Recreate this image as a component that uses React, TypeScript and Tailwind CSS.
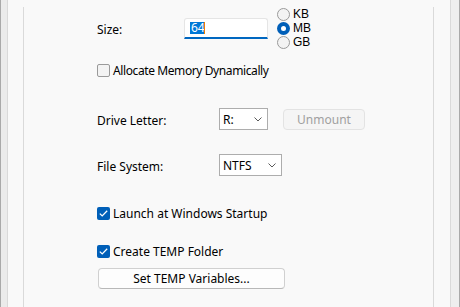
import React from "react";

const font = { fontFamily: '"Noto Sans", "Segoe UI", sans-serif' };
const radioFont = { fontFamily: '"Liberation Sans", Arial, sans-serif' };

function Chevron() {
  return (
    <svg width="8" height="5" viewBox="0 0 8 5" className="shrink-0">
      <path d="M0.5 0.5 L4 4 L7.5 0.5" fill="none" stroke="#5a5a5a" strokeWidth="1" />
    </svg>
  );
}

function Check({ checked, label, tight }: { checked: boolean; label: string; tight?: boolean }) {
  return (
    <div className="flex items-center h-[20px]">
      {checked ? (
        <div className="w-[13px] h-[13px] rounded-[2px] bg-[#005fb8] flex items-center justify-center shrink-0">
          <svg width="9" height="7" viewBox="0 0 9 7">
            <path d="M0.8 3.6 L3.2 5.9 L8.2 0.8" fill="none" stroke="#fff" strokeWidth="1.3" />
          </svg>
        </div>
      ) : (
        <div className="w-[13px] h-[13px] rounded-[2px] border border-[#9a9a9a] bg-[#f3f3f3] shrink-0" />
      )}
      <span
        className={
          tight
            ? "ml-[3px] text-[12px] text-black leading-[16px] pt-[1px] tracking-[-0.4px]"
            : "ml-[3px] text-[12px] text-black leading-[16px] pt-[1px]"
        }
      >
        {label}
      </span>
    </div>
  );
}

function Radio({ checked, label }: { checked: boolean; label: string }) {
  return (
    <div className="flex items-center h-[14px]">
      {checked ? (
        <div className="w-[13px] h-[13px] rounded-full bg-[#005fb8] flex items-center justify-center shrink-0">
          <div className="w-[5px] h-[5px] rounded-full bg-white" />
        </div>
      ) : (
        <div className="w-[13px] h-[13px] rounded-full border border-[#9a9a9a] bg-[#f3f3f3] shrink-0" />
      )}
      <span className="ml-[3px] text-[12px] text-black leading-[14px]" style={radioFont}>
        {label}
      </span>
    </div>
  );
}

export default function App() {
  return (
    <div className="w-[460px] h-[307px] flex bg-[#f0f0f0] overflow-hidden" style={font}>
      <div className="w-[7px] shrink-0 bg-[#ebebeb] border-l border-[#a9a9a9]" />
      <div className="w-[444px] shrink-0 bg-[#f9f9f9] border-l border-r border-[#d9d9d9] pl-[15px] pr-[16px]">
        <div className="h-full border-l border-r border-[#dadada] pl-[73px]">
          {/* Size row */}
          <div className="flex items-center h-[42px] mt-[7px]">
            <span className="w-[87px] text-[12px] text-black pt-[3px]">Size:</span>
            <div className="w-[84px] h-[21px] bg-white border border-[#e5e5e5] border-b-2 border-b-[#0067c0] rounded-t-[3px] flex items-center pl-[5px]">
              <span className="bg-[#0078d7] text-white text-[12px] leading-[12px] h-[12px] flex items-center pl-[1px]">64</span>
              <span className="w-px h-[12px] bg-[#f08000] -ml-px" />
            </div>
            <div className="ml-[9px] flex flex-col">
              <Radio checked={false} label="KB" />
              <Radio checked={true} label="MB" />
              <Radio checked={false} label="GB" />
            </div>
          </div>

          <div className="mt-[11px]">
            <Check checked={false} label="Allocate Memory Dynamically" tight />
          </div>

          {/* Drive letter */}
          <div className="flex items-center h-[22px] mt-[28px]">
            <span className="w-[122px] text-[12px] text-black pt-[3px]">Drive Letter:</span>
            <div className="w-[49px] h-[22px] bg-white border border-[#adadad] flex items-center justify-between pl-[3px] pr-[5px]">
              <span className="text-[12px] text-black pt-[1px]">R:</span>
              <Chevron />
            </div>
            <div className="ml-[15px] w-[82px] h-[21px] border border-[#e3e3e3] rounded-[4px] bg-[#f5f5f5] flex items-center justify-center">
              <span className="text-[12px] text-[#a0a0a0] pt-[1px]">Unmount</span>
            </div>
          </div>

          {/* File system */}
          <div className="flex items-center h-[22px] mt-[24px]">
            <span className="w-[122px] text-[12px] text-black pt-[3px]">File System:</span>
            <div className="w-[63px] h-[22px] bg-white border border-[#adadad] flex items-center justify-between pl-[3px] pr-[5px]">
              <span className="text-[12px] text-black pt-[1px]">NTFS</span>
              <Chevron />
            </div>
          </div>

          <div className="mt-[27px]">
            <Check checked={true} label="Launch at Windows Startup" />
          </div>
          <div className="mt-[18px]">
            <Check checked={true} label="Create TEMP Folder" />
          </div>

          <div className="mt-[7px] ml-px w-[187px] h-[21px] border border-[#d0d0d0] border-b-[#b8b8b8] rounded-[4px] bg-[#fdfdfd] flex items-center justify-center">
            <span className="text-[12px] text-black pt-[1px]">Set TEMP Variables...</span>
          </div>
        </div>
      </div>
      <div className="flex-1 bg-[#eeeeee] border-r border-[#a9a9a9]" />
    </div>
  );
}
